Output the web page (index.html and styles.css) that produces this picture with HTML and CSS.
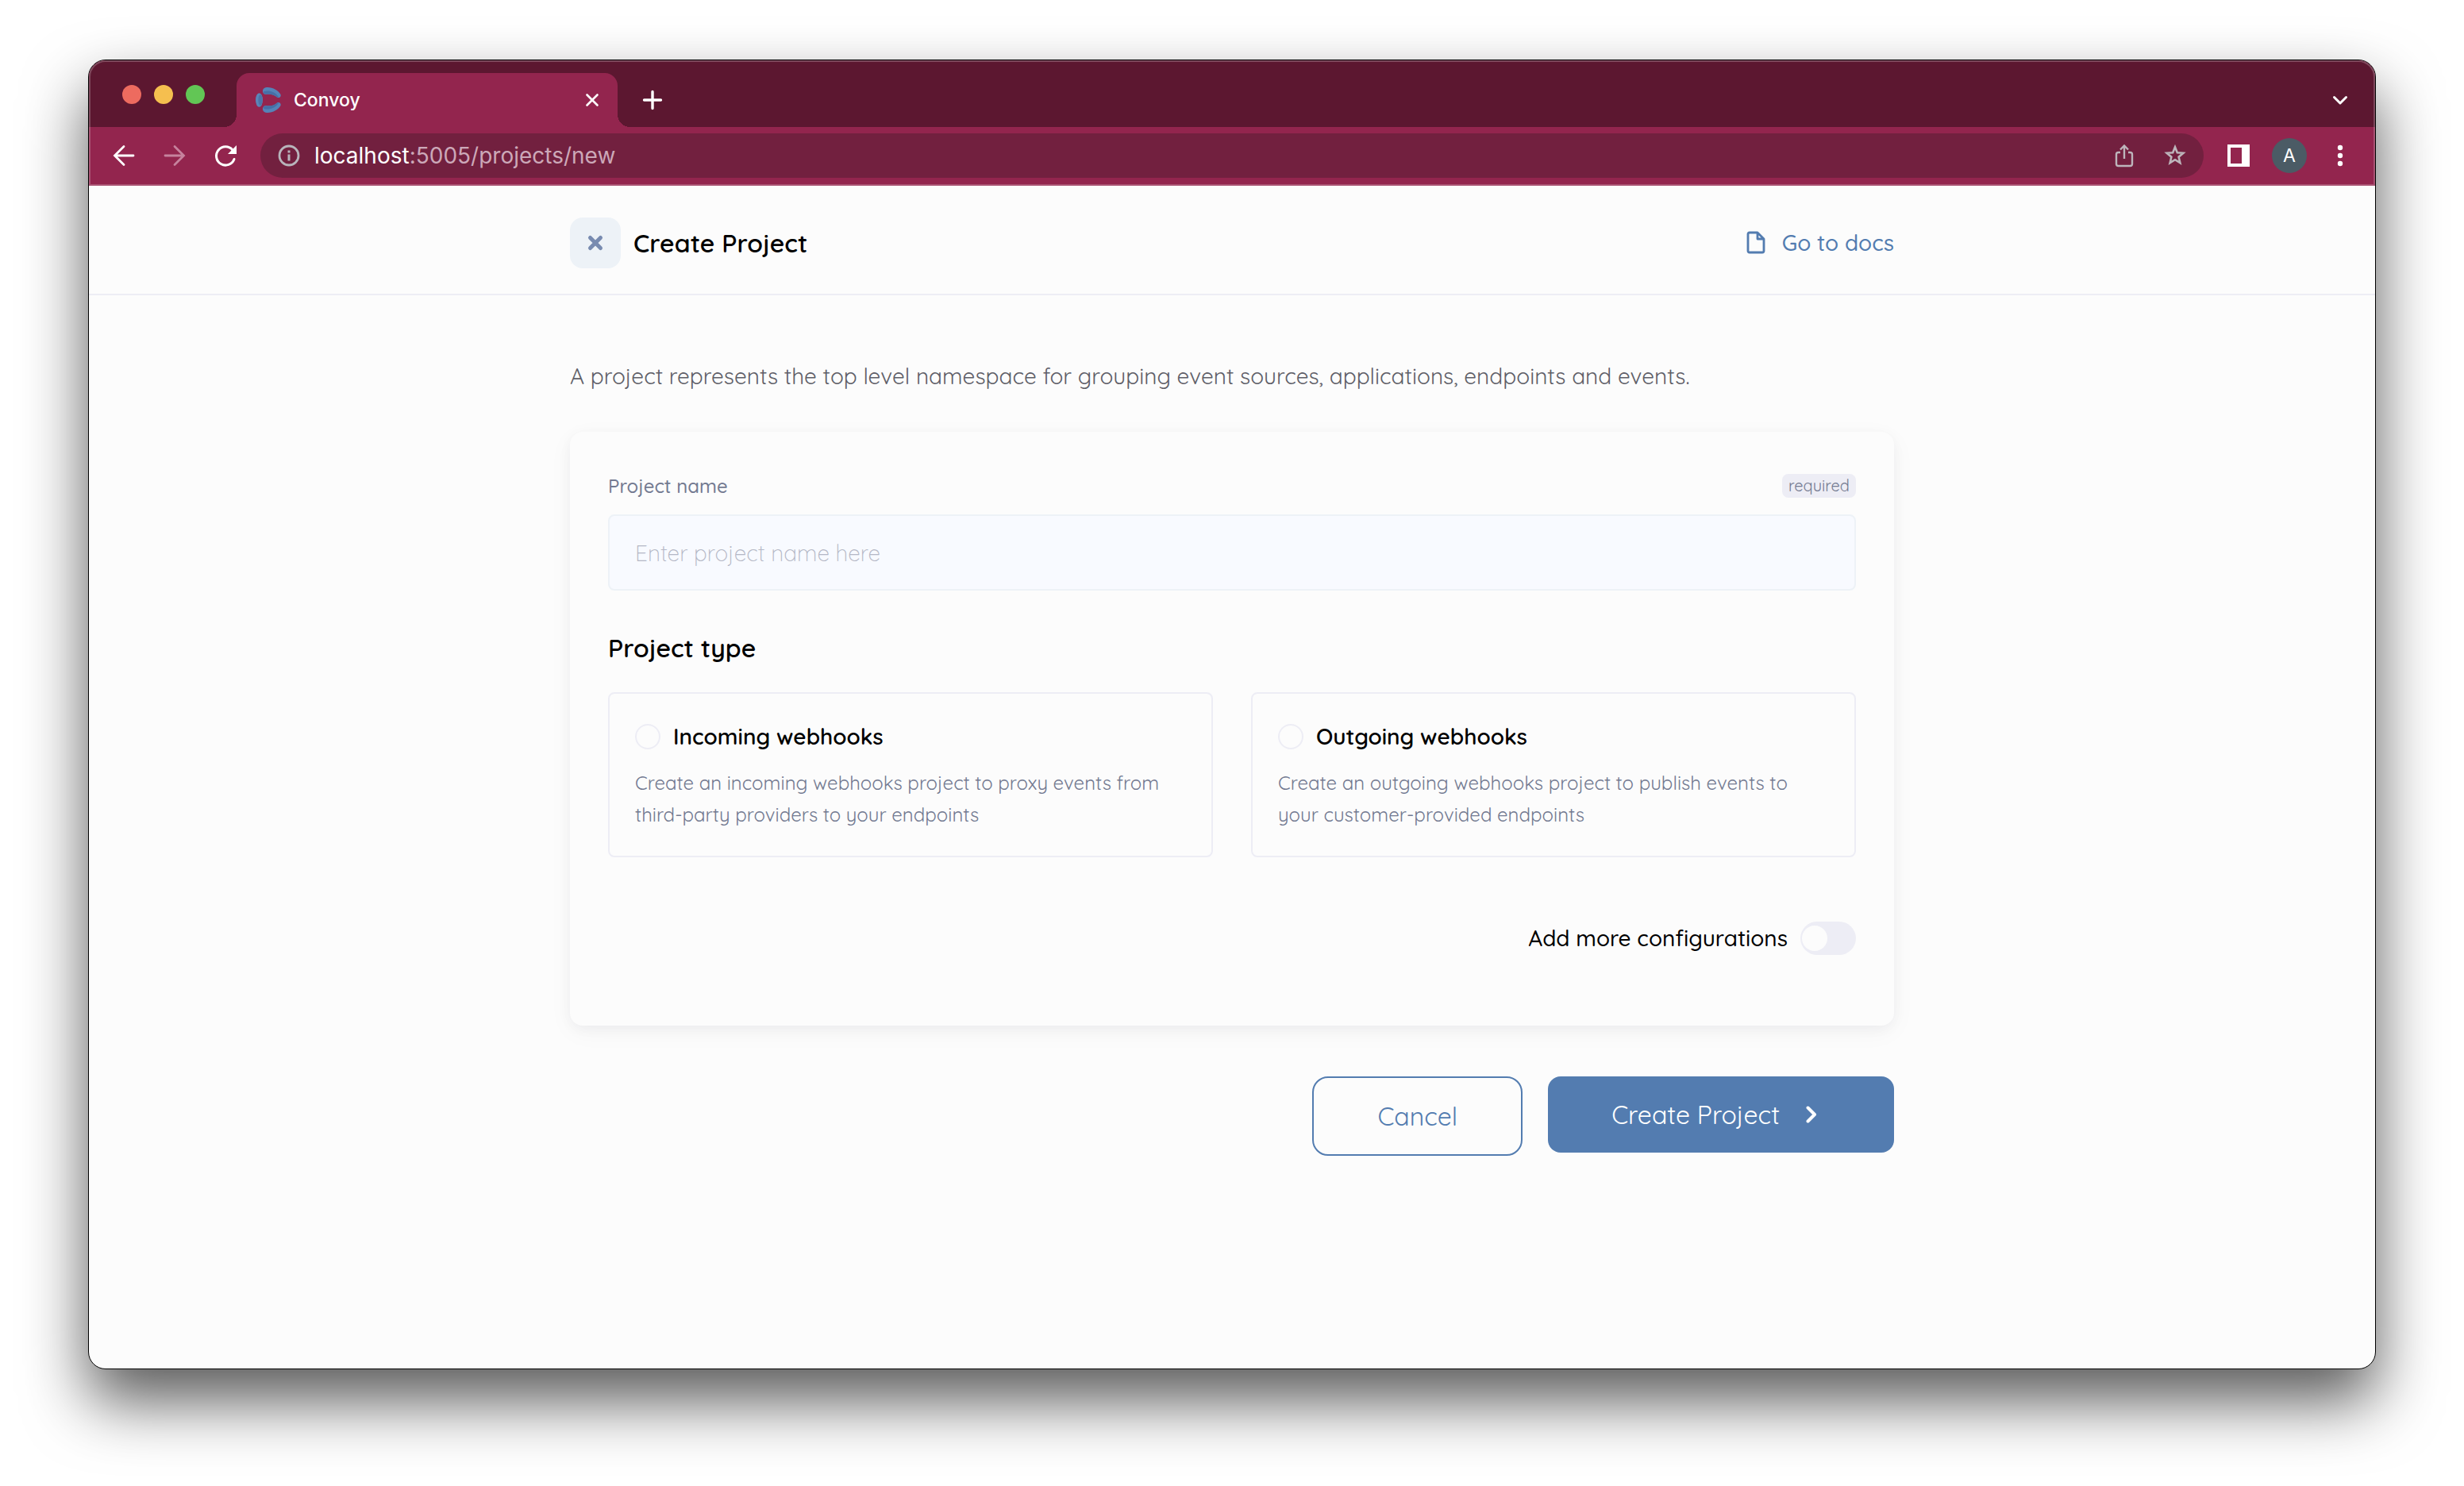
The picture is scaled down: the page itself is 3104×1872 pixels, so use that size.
FILE: index.html
```html
<!DOCTYPE html>
<html lang="en">
<head>
<meta charset="utf-8">
<meta name="viewport" content="width=device-width, initial-scale=1">
<title>Convoy</title>
<link rel="stylesheet" href="styles.css">
</head>
<body>
<div class="window">
  <header class="chrome">
    <div class="tab-strip">
      <div class="traffic">
        <span class="light light-red"></span>
        <span class="light light-yellow"></span>
        <span class="light light-green"></span>
      </div>
      <div class="tab">
        <svg class="favicon" viewBox="0 0 32 32" aria-hidden="true">
          <ellipse cx="4.5" cy="16" rx="4.5" ry="8.8" fill="#5b86b8"/>
          <ellipse cx="6" cy="16" rx="2.6" ry="7" fill="#4c74a8"/>
          <path d="M12.5.3C20-1 28.500 3.500 31.500 9C32.500 12 29.500 14 27 12.500C23.500 9 18 8 12.500 9C8 8.500 7.500 1.500 12.500.3Z" fill="#5583b8"/>
          <path d="M12.500 8.700C10 8 9.500 6 10.500 5C17 3.500 24 5 29 12C28.500 12.700 27.500 12.700 27 12.300C23 9 18 8 12.500 8.700Z" fill="#466fa6"/>
          <path d="M12.500 31.700C20 33 28.500 28.500 31.500 23C32.500 20 29.500 18 27 19.500C23.500 23 18 24 12.500 23C8 23.500 7.500 30.500 12.500 31.700Z" fill="#5583b8"/>
          <path d="M12.500 23.300C10 24 9.500 26 10.500 27C17 28.500 24 27 29 20C28.500 19.300 27.500 19.300 27 19.700C23 23 18 24 12.500 23.300Z" fill="#466fa6"/>
        </svg>
        <span class="tab-title">Convoy</span>
        <button class="tab-close" type="button" aria-label="Close tab">
          <svg class="icon-32" viewBox="0 0 32 32"><path d="M9.500 9.500L22.500 22.500M22.500 9.500L9.500 22.500" stroke="#fff" stroke-width="2.600" stroke-linecap="round"/></svg>
        </button>
      </div>
      <button class="chrome-button new-tab" type="button" aria-label="New tab">
        <svg class="icon-32" viewBox="0 0 32 32"><path d="M16 5.500V26.500M5.500 16H26.500" stroke="#fff" stroke-width="3.400" stroke-linecap="round"/></svg>
      </button>
      <button class="chrome-button tab-search" type="button" aria-label="Search tabs">
        <svg class="icon-32" viewBox="0 0 32 32"><path d="M8.500 12.500L16 20L23.500 12.500" fill="none" stroke="#fff" stroke-width="3" stroke-linecap="round" stroke-linejoin="round"/></svg>
      </button>
    </div>
    <div class="toolbar">
      <button class="chrome-button" type="button" aria-label="Back">
        <svg class="icon-32" viewBox="0 0 32 32"><path d="M28 16H5M16 4.500L4.500 16L16 27.500" fill="none" stroke="#fff" stroke-width="2.800" stroke-linecap="round"/></svg>
      </button>
      <button class="chrome-button" type="button" aria-label="Forward">
        <svg class="icon-32" viewBox="0 0 32 32"><path d="M4 16H27M16 4.500L27.500 16L16 27.500" fill="none" stroke="#c6829d" stroke-width="2.800" stroke-linecap="round"/></svg>
      </button>
      <button class="chrome-button" type="button" aria-label="Reload">
        <svg class="icon-32" viewBox="0 0 32 32"><path d="M27 20.500A11.600 11.600 0 1 1 25 9" fill="none" stroke="#fff" stroke-width="3" stroke-linecap="round"/><path d="M30 3V14H19Z" fill="#fff"/></svg>
      </button>
      <div class="omnibox">
        <svg class="site-info" viewBox="0 0 28 28" aria-hidden="true"><circle cx="14" cy="14" r="12" fill="none" stroke="#b8b4bb" stroke-width="2.800"/><path d="M14 12.500V20.500" stroke="#b8b4bb" stroke-width="3"/><path d="M14 7.500V10.500" stroke="#b8b4bb" stroke-width="3"/></svg>
        <span class="url"><span class="url-host">localhost</span>:5005/projects/new</span>
        <button class="chrome-button" type="button" aria-label="Share">
          <svg class="icon-32" viewBox="0 0 32 32"><path d="M11 12H8.500Q6 12 6 14.500V26.500Q6 29 8.500 29H23.500Q26 29 26 26.500V14.500Q26 12 23.500 12H21M16 20V4M11 8.500L16 3.500L21 8.500" fill="none" stroke="#bdb5bb" stroke-width="2.400"/></svg>
        </button>
        <button class="chrome-button" type="button" aria-label="Bookmark this page">
          <svg class="icon-32" viewBox="0 0 32 32"><path d="M16 5.200L18.800 12.200L26.400 12.800L20.600 17.700L22.400 25.200L16 21.200L9.600 25.200L11.400 17.700L5.600 12.800L13.200 12.200Z" fill="none" stroke="#bdb5bb" stroke-width="2.600"/></svg>
        </button>
      </div>
      <button class="chrome-button" type="button" aria-label="Side panel">
        <svg class="icon-32" viewBox="0 0 32 32"><path d="M2 2H30V30H2ZM6 6V26H20V6Z" fill="#fff" fill-rule="evenodd"/></svg>
      </button>
      <button class="chrome-button" type="button" aria-label="Profile"><span class="avatar">A</span></button>
      <button class="chrome-button" type="button" aria-label="Menu">
        <svg class="icon-32" viewBox="0 0 32 32" fill="#fff"><circle cx="16" cy="6" r="3.200"/><circle cx="16" cy="16" r="3.200"/><circle cx="16" cy="26" r="3.200"/></svg>
      </button>
    </div>
  </header>

  <div class="page">
    <div class="page-header">
      <div class="container header-row">
        <button class="close-button" type="button" aria-label="Close">
          <svg class="icon-32" viewBox="0 0 32 32"><path d="M9.500 9.500L22.500 22.500M22.500 9.500L9.500 22.500" stroke="#788bb0" stroke-width="5" stroke-linecap="round"/></svg>
        </button>
        <h1 class="heading">Create Project</h1>
        <a class="docs-link" href="#docs">
          <svg class="icon-32" viewBox="0 0 32 32"><path d="M7 3H17L25 11V26Q25 28 23 28H7Q5 28 5 26V5Q5 3 7 3ZM17 3V11H25" fill="none" stroke="#537cb0" stroke-width="2.800" stroke-linejoin="round"/></svg>
          Go to docs
        </a>
      </div>
    </div>

    <main class="container content">
      <p class="intro">A project represents the top level namespace for grouping event sources, applications, endpoints and events.</p>
      <form class="form">
        <div class="card">
          <div class="label-row">
            <label class="label" for="project-name">Project name</label>
            <span class="tag">required</span>
          </div>
          <input class="text-input" id="project-name" type="text" placeholder="Enter project name here">

          <h2 class="heading section-title">Project type</h2>
          <div class="types">
            <label class="type">
              <span class="type-head"><input class="radio" type="radio" name="type" value="incoming"><span class="type-name">Incoming webhooks</span></span>
              <span class="type-text">Create an incoming webhooks project to proxy events from third-party providers to your endpoints</span>
            </label>
            <label class="type">
              <span class="type-head"><input class="radio" type="radio" name="type" value="outgoing"><span class="type-name">Outgoing webhooks</span></span>
              <span class="type-text">Create an outgoing webhooks project to publish events to your customer-provided endpoints</span>
            </label>
          </div>

          <div class="more-row">
            <label class="more" for="more-config">Add more configurations</label>
            <input class="toggle" id="more-config" type="checkbox" role="switch">
          </div>
        </div>

        <div class="actions">
          <button class="button button-outline" type="button">Cancel</button>
          <button class="button button-primary" type="submit">
            Create Project
            <svg class="icon-48" viewBox="0 0 48 48" aria-hidden="true"><path d="M19.500 15.500L28 24L19.500 32.500" fill="none" stroke="#fff" stroke-width="4" stroke-linecap="round" stroke-linejoin="round"/></svg>
          </button>
        </div>
      </form>
    </main>
  </div>
</div>
</body>
</html>
```
FILE: styles.css
```css
* {
  box-sizing: border-box;
}

body {
  margin: 0;
  min-height: 100vh;
  padding: 75px 111px 147px;
  display: flex;
  background: #fff;
  color: #000;
  font-family: Quicksand, Lato, sans-serif;
  font-size: 28px;
  line-height: 40px;
}

button {
  margin: 0;
  padding: 0;
  border: 0;
  background: none;
  color: inherit;
  font: inherit;
}

h1, h2, p {
  margin: 0;
}

.icon-32 {
  display: block;
  flex: none;
  width: 32px;
  height: 32px;
}

.icon-48 {
  display: block;
  width: 48px;
  height: 48px;
}

/* Browser window */

.window {
  flex: 1;
  min-width: 0;
  display: flex;
  flex-direction: column;
  overflow: hidden;
  border: 1px solid #000;
  border-radius: 22px;
  background: #fcfcfc;
  box-shadow: 0 40px 80px rgba(0, 0, 0, .65);
}

.chrome {
  position: relative;
  background: #93254e;
  color: #fff;
  font-family: Inter, sans-serif;
}

/* Light hairline round the title bar and toolbar */
.chrome::after {
  content: "";
  position: absolute;
  inset: 0;
  border: 2px solid rgba(255, 255, 255, .22);
  border-radius: 21px 21px 0 0;
  pointer-events: none;
}

.tab-strip {
  display: flex;
  align-items: center;
  padding: 16px 12px 0 42px;
  background: #5c1730;
}

.traffic {
  display: flex;
  gap: 16px;
  padding-bottom: 14px;
}

.light {
  width: 24px;
  height: 24px;
  border-radius: 50%;
}

.light-red { background: #ed6b5f; }
.light-yellow { background: #f5bf4f; }
.light-green { background: #62c655; }

.tab {
  position: relative;
  width: 480px;
  height: 68px;
  margin-left: 40px;
  padding: 0 16px 0 24px;
  display: flex;
  align-items: center;
  gap: 16px;
  border-radius: 16px 16px 0 0;
  background: #93254e;
}

/* Flared feet of the active tab */
.tab::before,
.tab::after {
  content: "";
  position: absolute;
  bottom: 0;
  width: 16px;
  height: 16px;
}

.tab::before {
  right: 100%;
  background: radial-gradient(circle at 0 0, transparent 16px, #93254e 16px);
}

.tab::after {
  left: 100%;
  background: radial-gradient(circle at 100% 0, transparent 16px, #93254e 16px);
}

.favicon {
  width: 32px;
  height: 32px;
}

.tab-title {
  flex: 1;
  font-size: 23px;
  font-weight: 500;
}

.chrome-button {
  flex: none;
  width: 64px;
  height: 56px;
  display: flex;
  align-items: center;
  justify-content: center;
}

.new-tab {
  margin-left: 12px;
}

.tab-search {
  margin-left: auto;
}

.toolbar {
  display: flex;
  align-items: center;
  padding: 8px 12px 10px;
}

.omnibox {
  flex: 1;
  min-width: 0;
  height: 56px;
  margin: 0 12px;
  padding: 0 4px 0 22px;
  display: flex;
  align-items: center;
  border-radius: 28px;
  background: #72203f;
}

.site-info {
  width: 28px;
  height: 28px;
  margin-right: 18px;
}

.url {
  flex: 1;
  color: #cca8b8;
  font-size: 28px;
}

.url-host {
  color: #fff;
}

.avatar {
  width: 44px;
  height: 44px;
  border-radius: 50%;
  background: #4b5b65;
  font-size: 23px;
  line-height: 44px;
  text-align: center;
}

/* Page */

.page {
  flex: 1;
}

.container {
  max-width: 1668px;
  margin: 0 auto;
}

.page-header {
  padding: 40px 0 32px;
  border-bottom: 2px solid #ededf5;
}

.header-row {
  display: flex;
  align-items: center;
  gap: 16px;
}

.close-button {
  width: 64px;
  height: 64px;
  display: flex;
  align-items: center;
  justify-content: center;
  border-radius: 16px;
  background: #edf2f7;
}

.heading {
  font-size: 32px;
  font-weight: 600;
  line-height: 40px;
}

.docs-link {
  margin-left: auto;
  display: flex;
  align-items: center;
  gap: 16px;
  color: #537cb0;
  font-weight: 500;
  text-decoration: none;
}

.content {
  padding: 80px 0;
}

.intro {
  margin-bottom: 48px;
  color: #5f5f68;
  line-height: 44px;
}

.card {
  padding: 48px 48px 88px;
  border-radius: 16px;
  background: #fcfcfc;
  box-shadow: 0 4px 16px rgba(12, 26, 75, .04), 0 8px 32px rgba(0, 0, 0, .04);
}

.label-row {
  display: flex;
  align-items: center;
  justify-content: space-between;
  height: 40px;
  margin-bottom: 16px;
}

.label {
  color: #737a91;
  font-size: 24px;
  font-weight: 500;
}

.tag {
  padding: 0 8px;
  border-radius: 8px;
  background: #ededf5;
  color: #737a91;
  font-size: 20px;
  line-height: 30px;
}

.text-input {
  display: block;
  width: 100%;
  height: 96px;
  padding: 0 32px;
  border: 2px solid #edf2f7;
  border-radius: 8px;
  background: #f8faff;
  color: #000;
  font: inherit;
  font-weight: 300;
}

.text-input::placeholder {
  color: #b4b7c5;
  opacity: 1;
}

.section-title {
  margin: 52px 0 36px;
}

.types {
  display: grid;
  grid-template-columns: 1fr 1fr;
  gap: 48px;
}

.type {
  padding: 32px;
  border: 2px solid #ededf5;
  border-radius: 8px;
}

.type-head {
  display: flex;
  align-items: center;
  gap: 16px;
  height: 44px;
  margin-bottom: 16px;
}

.radio {
  appearance: none;
  width: 32px;
  height: 32px;
  margin: 0;
  border: 2px solid #ededf5;
  border-radius: 50%;
}

.radio:checked {
  border: 10px solid #537cb0;
}

.type-name {
  font-weight: 600;
}

.type-text {
  display: block;
  color: #737a91;
  font-size: 24px;
}

.more-row {
  display: flex;
  align-items: center;
  justify-content: flex-end;
  gap: 16px;
  height: 44px;
  margin-top: 80px;
}

.more {
  font-weight: 500;
}

.toggle {
  appearance: none;
  display: flex;
  align-items: center;
  width: 70px;
  height: 42px;
  margin: 0;
  padding: 0 2px;
  border-radius: 21px;
  background: #ededf5;
}

.toggle::before {
  content: "";
  width: 32px;
  height: 32px;
  border-radius: 50%;
  background: #fcfcfc;
}

.toggle:checked {
  justify-content: flex-end;
  background: #537cb0;
}

.actions {
  display: flex;
  align-items: flex-start;
  justify-content: flex-end;
  gap: 32px;
  margin-top: 64px;
}

.button {
  display: flex;
  align-items: center;
  gap: 16px;
  padding: 24px 80px;
  border-radius: 16px;
  font-size: 32px;
  line-height: 48px;
}

.button-outline {
  border: 2px solid #537cb0;
  border-radius: 20px;
  color: #537cb0;
}

.button-primary {
  background: #537cb0;
  color: #fff;
}
```
